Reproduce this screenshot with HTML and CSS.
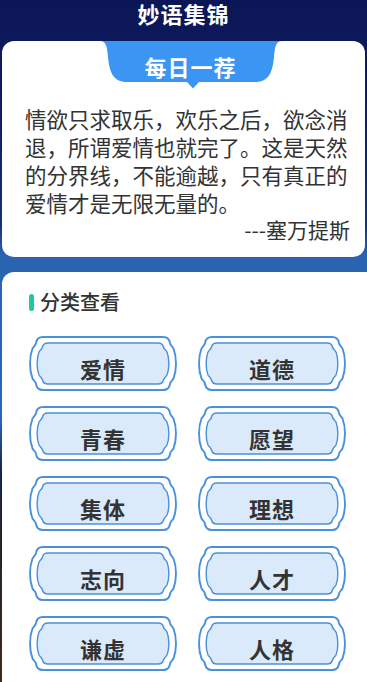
FILE: index.html
```html
<!DOCTYPE html>
<html lang="zh">
<head>
<meta charset="utf-8">
<title>妙语集锦</title>
<link rel="stylesheet" href="styles.css">
</head>
<body>
<header class="topbar"><h1 class="title">妙语集锦</h1></header>

<section class="card daily">
  <div class="tab">
    <svg class="tab-bg" viewBox="0 0 182 48" preserveAspectRatio="none" aria-hidden="true">
      <path d="M0 0 H182 C176 0 175 5 174 16 C172.5 31 169 41 155 41 H99 L93 47.5 L87 41 H27 C13 41 9.5 31 8 16 C7 5 6 0 0 0 Z" fill="#3a96f2"/>
    </svg>
    <span class="tab-text">每日一荐</span>
  </div>
  <p class="quote">情欲只求取乐，欢乐之后，欲念消退，所谓爱情也就完了。这是天然的分界线，不能逾越，只有真正的爱情才是无限无量的。</p>
  <p class="author">---塞万提斯</p>
</section>

<section class="card cats">
  <h2 class="cats-head"><span class="bar"></span>分类查看</h2>
  <div class="grid">
    <div class="btn"><svg class="btn-bg" viewBox="0 0 148 55" preserveAspectRatio="none" aria-hidden="true"><use href="#frame"/></svg><span class="btn-text">爱情</span></div>
    <div class="btn"><svg class="btn-bg" viewBox="0 0 148 55" preserveAspectRatio="none" aria-hidden="true"><use href="#frame"/></svg><span class="btn-text">道德</span></div>
    <div class="btn"><svg class="btn-bg" viewBox="0 0 148 55" preserveAspectRatio="none" aria-hidden="true"><use href="#frame"/></svg><span class="btn-text">青春</span></div>
    <div class="btn"><svg class="btn-bg" viewBox="0 0 148 55" preserveAspectRatio="none" aria-hidden="true"><use href="#frame"/></svg><span class="btn-text">愿望</span></div>
    <div class="btn"><svg class="btn-bg" viewBox="0 0 148 55" preserveAspectRatio="none" aria-hidden="true"><use href="#frame"/></svg><span class="btn-text">集体</span></div>
    <div class="btn"><svg class="btn-bg" viewBox="0 0 148 55" preserveAspectRatio="none" aria-hidden="true"><use href="#frame"/></svg><span class="btn-text">理想</span></div>
    <div class="btn"><svg class="btn-bg" viewBox="0 0 148 55" preserveAspectRatio="none" aria-hidden="true"><use href="#frame"/></svg><span class="btn-text">志向</span></div>
    <div class="btn"><svg class="btn-bg" viewBox="0 0 148 55" preserveAspectRatio="none" aria-hidden="true"><use href="#frame"/></svg><span class="btn-text">人才</span></div>
    <div class="btn"><svg class="btn-bg" viewBox="0 0 148 55" preserveAspectRatio="none" aria-hidden="true"><use href="#frame"/></svg><span class="btn-text">谦虚</span></div>
    <div class="btn"><svg class="btn-bg" viewBox="0 0 148 55" preserveAspectRatio="none" aria-hidden="true"><use href="#frame"/></svg><span class="btn-text">人格</span></div>
  </div>
</section>

<svg class="defs" width="0" height="0" aria-hidden="true">
  <defs>
    <g id="frame">
      <path d="M14 1 H134 C138 1 140.5 3.5 141 7 C141.5 10 143.5 10.5 144.5 12.5 C147.8 21 147.8 34 144.5 42.5 C143.5 44.5 141.5 45 141 48 C140.5 51.5 138 54 134 54 H14 C10 54 7.5 51.5 7 48 C6.5 45 4.5 44.5 3.5 42.5 C0.2 34 0.2 21 3.5 12.5 C4.5 10.5 6.5 10 7 7 C7.5 3.5 10 1 14 1 Z" fill="#ffffff" stroke="#4a90da" stroke-width="1.9"/>
      <path d="M19 7 H129 C132 7 134 8.5 134.5 11 C135 13.5 137 14 138 16 C140.5 22.5 140.5 32.5 138 39 C137 41 135 41.5 134.5 44 C134 46.5 132 48 129 48 H19 C16 48 14 46.5 13.5 44 C13 41.5 11 41 10 39 C7.5 32.5 7.5 22.5 10 16 C11 14 13 13.5 13.5 11 C14 8.5 16 7 19 7 Z" fill="#dbeafb" stroke="#4a90da" stroke-width="1.4"/>
    </g>
  </defs>
</svg>
</body>
</html>
```

FILE: styles.css
```css
* { box-sizing: border-box; }

html, body {
  margin: 0;
  padding: 0;
}

body {
  width: 367px;
  min-height: 682px;
  overflow: hidden;
  font-family: "Noto Sans CJK SC", "Noto Sans", sans-serif;
  color: #333;
  background: linear-gradient(to bottom,
    #0b1656 0px,
    #0f1e62 120px,
    #16307a 225px,
    #2a63b0 255px,
    #2b66b2 420px,
    #18244a 470px,
    #2a2420 560px,
    #3a2c22 682px);
}

.topbar {
  height: 41px;
  display: flex;
  justify-content: center;
  padding-top: 1px;
}

.title {
  margin: 0;
  font-size: 22px;
  line-height: 24px;
  font-weight: 700;
  letter-spacing: 1px;
  color: #fff;
}

.card {
  background: #fff;
  margin-left: 2px;
}

.daily {
  margin-right: 2px;
  border-radius: 12px;
  padding: 0 15px 18px 23px;
  display: flex;
  flex-direction: column;
}

.tab {
  position: relative;
  align-self: center;
  width: 182px;
  height: 48px;
  margin-left: 6px;
  display: flex;
  justify-content: center;
  padding-top: 11px;
}

.tab-bg {
  position: absolute;
  left: 0;
  top: 0;
  width: 100%;
  height: 100%;
}

.tab-text {
  position: relative;
  font-size: 22px;
  line-height: 28px;
  font-weight: 700;
  letter-spacing: 1px;
  color: #fff;
}

.quote {
  margin: 16px 0 0;
  font-size: 21.5px;
  line-height: 28px;
  color: #333;
}

.author {
  margin: 2px 0 0;
  text-align: right;
  font-size: 21px;
  line-height: 20px;
  color: #333;
}

.cats {
  margin-top: 15px;
  border-radius: 12px 0 0 0;
  padding: 18px 0 20px 27px;
  min-height: 420px;
}

.cats-head {
  margin: 0;
  display: flex;
  align-items: center;
  gap: 6px;
  font-size: 20px;
  line-height: 24px;
  font-weight: 500;
  color: #333;
}

.bar {
  width: 5px;
  height: 17px;
  border-radius: 3px;
  background: #1ec9a0;
}

.grid {
  margin-top: 22px;
  display: grid;
  grid-template-columns: 148px 148px;
  column-gap: 21px;
  row-gap: 15px;
}

.btn {
  position: relative;
  height: 55px;
  display: flex;
  justify-content: center;
  align-items: center;
  padding-top: 9px;
}

.btn-bg {
  position: absolute;
  left: 0;
  top: 0;
  width: 100%;
  height: 100%;
  overflow: visible;
}

.btn-text {
  position: relative;
  font-size: 22px;
  line-height: 28px;
  font-weight: 700;
  color: #333;
  letter-spacing: 1px;
}

.defs {
  position: absolute;
  width: 0;
  height: 0;
}
```
